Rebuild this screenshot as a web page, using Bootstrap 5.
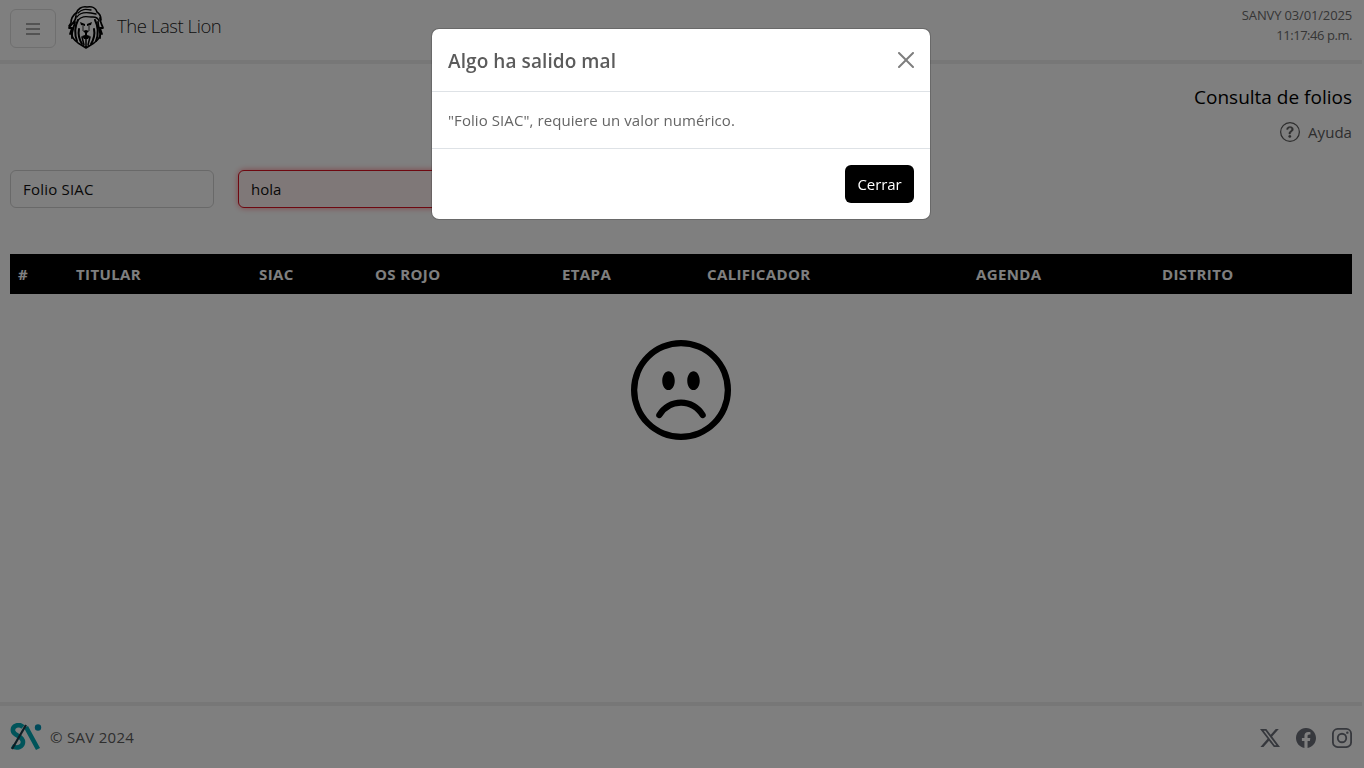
<!DOCTYPE html>
<html lang="es">
<head>
<meta charset="utf-8">
<meta name="viewport" content="width=device-width, initial-scale=1">
<title>The Last Lion</title>
<link href="https://cdn.jsdelivr.net/npm/bootstrap@5.3.0/dist/css/bootstrap.min.css" rel="stylesheet">
<script src="https://cdn.jsdelivr.net/npm/bootstrap@5.3.0/dist/js/bootstrap.bundle.min.js" defer></script>
<style>
  html { background: #fff; }
  body { width: 1362px; height: 768px; overflow: hidden; font-family: "Open Sans", sans-serif; font-size: 15px; letter-spacing: .05px; color: #000; }
  svg { display: block; flex: none; }
  .page-pad { padding-left: 10px; padding-right: 10px; }
  .top-bar { height: 64px; border-bottom: 4px solid #efefef; padding-top: 5px; }
  .menu-btn { width: 46px; height: 39px; margin-top: 4px; border: 1px solid #dedede; border-radius: 6px; background: none; color: #8a8a8a; }
  .brand-name { font-size: 18.5px; font-weight: 300; color: #1c1c1c; letter-spacing: -.43px; line-height: 42px; padding-left: 1px; }
  .clock { font-size: 13px; line-height: 20px; color: #6c6c6c; letter-spacing: -.15px; }
  .clock-time { letter-spacing: -.45px; }
  .page-title { font-size: 19px; line-height: 24px; margin-top: 21px; letter-spacing: 0; }
  .help-link { height: 24px; color: #5c5c5c; line-height: 24px; margin-top: 11px; }
  .help-link span { margin-top: -1px; }
  .fields { margin-top: 26px; gap: 24px; }
  .field { width: 204px; height: 38px; font-size: 15px; line-height: 24px; letter-spacing: .2px; color: #111; border-color: #d2d2d2; }
  .field-bad, .field-bad:focus { width: 432px; letter-spacing: 0; background: #fff0f0; border-color: #dc1020; box-shadow: 0 0 6px #ff8a92; }
  .result-head { margin-top: 46px; table-layout: fixed; }
  .result-head th { background: #000; color: #fff; height: 40px; padding: 8px; line-height: 24px; border: 0; white-space: nowrap; font-size: 15px; letter-spacing: .38px; }
  .frown { margin-top: 46px; }
  .foot-bar { height: 66px; border-top: 4px solid #efefef; color: #5c5c5c; }
  .copy-note { letter-spacing: .3px; }
  .social { color: #6c707a; padding-top: 2px; }
  .alert-box .modal-content { color: #656565; }
  .alert-box .modal-body { line-height: 24px; letter-spacing: .08px; }
  .alert-box .modal-title { font-size: 19px; line-height: 30px; font-weight: 600; color: #5b5b5b; padding-top: 1px; margin-bottom: -1px; letter-spacing: .08px; }
  .alert-box .btn-close { font-size: 16px; }
  .btn-shut { background: #000 !important; color: #fff !important; width: 69px; height: 38px; padding: 0; margin: 0; font-size: 15px; font-weight: 500; letter-spacing: -.1px; }
  .modal.alert-box { width: 1362px; }
</style>
</head>
<body class="d-flex flex-column">
<header class="top-bar page-pad d-flex align-items-start">
  <button class="menu-btn d-flex align-items-center justify-content-center" aria-label="Menú">
    <svg width="14" height="14" viewBox="0 0 14 14" stroke="currentColor" stroke-width="1.5"><path d="M0 2h14M0 7h14M0 12h14"/></svg>
  </button>
  <svg class="ms-2" width="44" height="44" viewBox="0 0 44 44">
    <g fill="none" stroke="#000" stroke-linecap="round" stroke-linejoin="round">
      <path stroke-width="1.600" d="M12 9c1-5 6-8 11-7 5-1 9 1 10 5 3 2 4 5 4 8M12 8c-4 3-5 6-5 10l-2 3"/>
      <path stroke-width="1.300" d="M14 8c4-4 7-4 13-3M13 12c3-5 8-5 14-4l5 1M14 15c5-5 9-3 15-3 3 0 5 1 6 4"/>
      <path stroke-width="1.800" d="M12 11c0 6-5 8-7 12l3 0-2 6M36 13c0 5 2 6 3 10l-3 0 2 6M11 17c-1 6-4 9-3 16M34 17c0 6 3 9 2 16"/>
      <path stroke-width="2" d="M14 15c-3 6-4 13-1 21M31 15c3 6 4 13 1 21M15 24c-1 5 0 10 3 15M30 24c1 5 0 10-3 15"/>
      <path stroke-width="1.500" d="M7 28c1 5 3 7 7 10l8 5 8-5c4-3 6-5 7-10M18 32l2 8M26 32l-2 8M22 34v8"/>
    </g>
    <path d="M16 17l5 2v2l-4-1zM28 17l-5 2v2l4-1zM19 26l3-1 3 1-2 2v2l3 1-2 3h-4l-2-3 3-1v-2z"/>
    <path d="M19 21v5M25 21v5" stroke="#000" stroke-width=".8"/>
  </svg>
  <span class="brand-name ms-2">The Last Lion</span>
  <div class="clock ms-auto text-end"><div>SANVY 03/01/2025</div><div class="clock-time">11:17:46 p.m.</div></div>
</header>
<main class="page-pad flex-grow-1">
  <div class="page-title text-end">Consulta de folios</div>
  <div class="help-link d-flex justify-content-end align-items-center gap-2">
    <svg width="20" height="20" viewBox="0 0 16 16" fill="currentColor"><path d="M8 15A7 7 0 1 1 8 1a7 7 0 0 1 0 14zm0 1A8 8 0 1 0 8 0a8 8 0 0 0 0 16z"/><path stroke="currentColor" stroke-width=".3" d="M5.255 5.786a.237.237 0 0 0 .241.247h.825c.138 0 .248-.113.266-.25.09-.656.54-1.134 1.342-1.134.686 0 1.314.343 1.314 1.168 0 .635-.374.927-.965 1.371-.673.489-1.206 1.06-1.168 1.987l.003.217a.25.25 0 0 0 .25.246h.811a.25.25 0 0 0 .25-.25v-.105c0-.718.273-.927 1.01-1.486.609-.463 1.244-.977 1.244-2.056 0-1.511-1.276-2.241-2.673-2.241-1.267 0-2.655.59-2.75 2.286zm1.557 5.763c0 .533.425.927 1.01.927.609 0 1.028-.394 1.028-.927 0-.552-.42-.94-1.029-.94-.584 0-1.009.388-1.009.94z"/></svg>
    <span>Ayuda</span>
  </div>
  <div class="fields d-flex">
    <div class="field form-control">Folio SIAC</div>
    <input class="field field-bad form-control" value="hola" aria-label="Folio">
  </div>
  <table class="result-head table mb-0">
    <colgroup><col style="width:58px"><col style="width:183px"><col style="width:116px"><col style="width:187px"><col style="width:145px"><col style="width:269px"><col style="width:186px"><col></colgroup>
    <thead><tr><th>#</th><th>TITULAR</th><th>SIAC</th><th>OS ROJO</th><th>ETAPA</th><th>CALIFICADOR</th><th>AGENDA</th><th>DISTRITO</th></tr></thead>
  </table>
  <div class="frown d-flex justify-content-center">
    <svg width="100" height="100" viewBox="0 0 16 16"><path d="M8 15A7 7 0 1 1 8 1a7 7 0 0 1 0 14zm0 1A8 8 0 1 0 8 0a8 8 0 0 0 0 16z"/><path d="M4.285 12.433a.5.5 0 0 0 .683-.183A3.498 3.498 0 0 1 8 10.5c1.295 0 2.426.703 3.032 1.75a.5.5 0 0 0 .866-.5A4.498 4.498 0 0 0 8 9.5a4.5 4.5 0 0 0-3.898 2.25.5.5 0 0 0 .183.683zM7 6.5C7 7.328 6.552 8 6 8s-1-.672-1-1.5S5.448 5 6 5s1 .672 1 1.5zm4 0c0 .828-.448 1.5-1 1.5s-1-.672-1-1.5S9.448 5 10 5s1 .672 1 1.5z"/></svg>
  </div>
</main>
<footer class="foot-bar page-pad d-flex align-items-center">
  <svg width="32" height="28" viewBox="0 0 32 28" fill="none">
    <path d="M13 4C9 0 2 3 3 8c1 5 10 5 10 11 0 5-6 7-11 4M16 4l12 22" stroke="#00a9b5" stroke-width="4.600"/>
    <circle cx="28" cy="4.500" r="3.200" fill="#0095b5"/>
    <path d="M2 26 16 2" stroke="#1c3c4a" stroke-width="2.200"/>
  </svg>
  <span class="copy-note ms-2">© SAV 2024</span>
  <div class="social ms-auto d-flex gap-3">
    <svg width="20" height="20" viewBox="0 0 16 16" fill="currentColor"><path d="M12.6.75h2.454l-5.36 6.142L16 15.25h-4.937l-3.867-5.07-4.425 5.07H.316l5.733-6.57L0 .75h5.063l3.495 4.633L12.601.75Zm-.86 13.028h1.36L4.323 2.145H2.865z"/></svg>
    <svg width="20" height="20" viewBox="0 0 16 16" fill="currentColor"><path d="M16 8.049c0-4.446-3.582-8.05-8-8.05C3.58 0-.002 3.603-.002 8.05c0 4.017 2.926 7.347 6.75 7.951v-5.625h-2.03V8.05H6.75V6.275c0-2.017 1.195-3.131 3.022-3.131.876 0 1.791.157 1.791.157v1.98h-1.009c-.993 0-1.303.621-1.303 1.258v1.51h2.218l-.354 2.326H9.25V16c3.824-.604 6.75-3.934 6.75-7.951z"/></svg>
    <svg width="20" height="20" viewBox="0 0 16 16" fill="none" stroke="currentColor" stroke-width="1.450"><rect x=".72" y=".72" width="14.560" height="14.560" rx="4"/><circle cx="8" cy="8" r="3.400"/><circle cx="12.270" cy="3.730" r=".96" fill="currentColor" stroke="none"/></svg>
  </div>
</footer>

<div class="modal-backdrop show"></div>
<div class="modal alert-box show d-block" tabindex="-1" role="dialog">
  <div class="modal-dialog">
    <div class="modal-content">
      <div class="modal-header"><h5 class="modal-title">Algo ha salido mal</h5><button class="btn-close" aria-label="Cerrar"></button></div>
      <div class="modal-body">"Folio SIAC", requiere un valor numérico.</div>
      <div class="modal-footer p-3"><button class="btn btn-shut">Cerrar</button></div>
    </div>
  </div>
</div>
</body>
</html>
